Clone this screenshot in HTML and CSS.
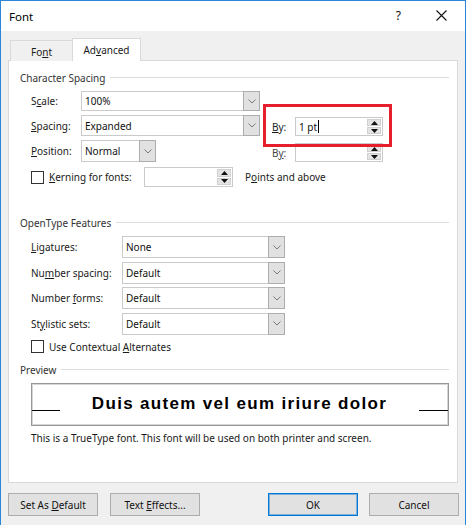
FILE: index.html
```html
<!DOCTYPE html>
<html>
<head>
<meta charset="utf-8">
<link rel="stylesheet" href="styles.css">
</head>
<body>
<div class="window">
  <div class="titlebar">
    <span class="title">Font</span>
    <span class="help">?</span>
    <span class="close"><svg width="11" height="11" viewBox="0 0 11 11"><path d="M0.5 0.5L10.5 10.5M10.5 0.5L0.5 10.5" stroke="#111" stroke-width="1.1" fill="none"/></svg></span>
  </div>
  <div class="body">
    <div class="tabs">
      <div class="tab"><span>Fo<u>n</u>t</span></div>
      <div class="tab active"><span>Ad<u>v</u>anced</span></div>
    </div>
    <div class="panel">
      <div class="group-head"><span>Character Spacing</span><i class="rule"></i></div>
      <div class="cs-grid">
        <div class="lbl r1">S<u>c</u>ale:</div>
        <div class="combo r1 wide"><span class="val">100%</span><span class="dd"><svg width="8" height="5" viewBox="0 0 8 5"><path d="M0.5 0.5L4 4L7.5 0.5" stroke="#7a7a7a" fill="none"/></svg></span></div>

        <div class="lbl r2"><u>S</u>pacing:</div>
        <div class="combo r2 wide"><span class="val">Expanded</span><span class="dd"><svg width="8" height="5" viewBox="0 0 8 5"><path d="M0.5 0.5L4 4L7.5 0.5" stroke="#7a7a7a" fill="none"/></svg></span></div>
        <div class="bylbl r2"><span><u>B</u>y:</span></div>
        <div class="spin r2 by"><span class="val"><span>1 pt</span><i class="caret"></i></span><span class="spbtns"><span class="spb"><svg width="7" height="4" viewBox="0 0 7 4"><path d="M3.5 0L7 4H0Z" fill="#111"/></svg></span><span class="spb"><svg width="7" height="4" viewBox="0 0 7 4"><path d="M0 0H7L3.5 4Z" fill="#111"/></svg></span></span></div>

        <div class="lbl r3"><u>P</u>osition:</div>
        <div class="combo r3 narrow"><span class="val">Normal</span><span class="dd"><svg width="8" height="5" viewBox="0 0 8 5"><path d="M0.5 0.5L4 4L7.5 0.5" stroke="#7a7a7a" fill="none"/></svg></span></div>
        <div class="bylbl r3"><span>B<u>y</u>:</span></div>
        <div class="spin r3 by"><span class="val"></span><span class="spbtns"><span class="spb"><svg width="7" height="4" viewBox="0 0 7 4"><path d="M3.5 0L7 4H0Z" fill="#111"/></svg></span><span class="spb"><svg width="7" height="4" viewBox="0 0 7 4"><path d="M0 0H7L3.5 4Z" fill="#111"/></svg></span></span></div>

        <div class="highlight"></div>
      </div>
      <div class="kern-row">
        <div class="check-label kern"><span class="cb"></span><span><u>K</u>erning for fonts:</span></div>
        <div class="spin kspin"><span class="val"></span><span class="spbtns"><span class="spb"><svg width="7" height="4" viewBox="0 0 7 4"><path d="M3.5 0L7 4H0Z" fill="#111"/></svg></span><span class="spb"><svg width="7" height="4" viewBox="0 0 7 4"><path d="M0 0H7L3.5 4Z" fill="#111"/></svg></span></span></div>
        <div class="pts">P<u>o</u>ints and above</div>
      </div>

      <div class="group-head ot-head"><span>OpenType Features</span><i class="rule"></i></div>
      <div class="ot-grid">
        <div class="lbl"><u>L</u>igatures:</div>
        <div class="combo"><span class="val">None</span><span class="dd"><svg width="8" height="5" viewBox="0 0 8 5"><path d="M0.5 0.5L4 4L7.5 0.5" stroke="#7a7a7a" fill="none"/></svg></span></div>
        <div class="lbl">Nu<u>m</u>ber spacing:</div>
        <div class="combo"><span class="val">Default</span><span class="dd"><svg width="8" height="5" viewBox="0 0 8 5"><path d="M0.5 0.5L4 4L7.5 0.5" stroke="#7a7a7a" fill="none"/></svg></span></div>
        <div class="lbl">Number <u>f</u>orms:</div>
        <div class="combo"><span class="val">Default</span><span class="dd"><svg width="8" height="5" viewBox="0 0 8 5"><path d="M0.5 0.5L4 4L7.5 0.5" stroke="#7a7a7a" fill="none"/></svg></span></div>
        <div class="lbl">St<u>y</u>listic sets:</div>
        <div class="combo"><span class="val">Default</span><span class="dd"><svg width="8" height="5" viewBox="0 0 8 5"><path d="M0.5 0.5L4 4L7.5 0.5" stroke="#7a7a7a" fill="none"/></svg></span></div>
      </div>
      <div class="check-label ctx"><span class="cb"></span><span>Use Contextual <u>A</u>lternates</span></div>

      <div class="group-head pv-head"><span>Preview</span><i class="rule"></i></div>
      <div class="preview-box">
        <i class="pline left"></i>
        <span class="ptext">Duis autem vel eum iriure dolor</span>
        <i class="pline right"></i>
      </div>
      <div class="desc">This is a TrueType font. This font will be used on both printer and screen.</div>
    </div>
    <div class="footer">
      <button class="btn">Set As <u>D</u>efault</button>
      <button class="btn">Text <u>E</u>ffects...</button>
      <span class="spacer"></span>
      <button class="btn default">OK</button>
      <button class="btn">Cancel</button>
    </div>
  </div>
</div>
</body>
</html>
```
FILE: styles.css
```css
html, body {
  margin: 0;
  padding: 0;
  background: #f0f0f0;
}
body {
  font-family: "Noto Sans", "Open Sans", sans-serif;
  font-size: 10px;
  color: #1a1a1a;
}
u { text-decoration: underline; text-underline-offset: 1px; }

.window {
  width: 466px;
  height: 525px;
  box-sizing: border-box;
  border: 1px solid #2b86d6;
  border-bottom: none;
  background: #f0f0f0;
  display: flex;
  flex-direction: column;
}

.titlebar {
  height: 30px;
  background: #fff;
  display: flex;
  align-items: center;
  flex: none;
}
.title {
  font-size: 11.5px;
  color: #000;
  margin-left: 8px;
  flex: 1;
}
.help {
  font-size: 12px;
  color: #111;
  margin-right: 35px;
  margin-top: -1px;
}
.close {
  display: flex;
  margin-right: 18px;
  margin-top: -1px;
}

.body {
  flex: 1;
  display: flex;
  flex-direction: column;
  padding: 7px 7px 0 7px;
}

.tabs {
  display: flex;
  align-items: flex-end;
  padding-left: 2px;
  height: 23px;
  margin-bottom: -1px;
  position: relative;
  z-index: 1;
}
.tab {
  box-sizing: border-box;
  height: 21px;
  border: 1px solid #d9d9d9;
  border-bottom: none;
  border-right: none;
  background: #f0f0f0;
  display: flex;
  align-items: center;
  justify-content: center;
  width: 62px;
  padding-top: 1px;
}
.tab.active {
  height: 23px;
  width: 69px;
  background: #fff;
  border-right: 1px solid #d9d9d9;
  padding-top: 0;
}

.panel {
  box-sizing: border-box;
  height: 423px;
  background: #fff;
  border: 1px solid #d9d9d9;
  padding: 9px 8px 0 0;
  display: flex;
  flex-direction: column;
}

.group-head {
  display: flex;
  align-items: center;
  height: 16px;
  padding-left: 11px;
  color: #333;
}
.group-head .rule {
  flex: 1;
  height: 1px;
  background: #dcdcdc;
  margin-left: 5px;
  margin-top: -1px;
}

.lbl {
  align-self: center;
  line-height: 16px;
  white-space: nowrap;
}

.cs-grid {
  position: relative;
  margin-top: 5px;
  padding-left: 22px;
  display: grid;
  grid-template-columns: 50px 179px 12px 23px 88px;
  grid-template-rows: 20px 21px 22px;
  row-gap: 4px;
}
.cs-grid .r1 { grid-row: 1; }
.cs-grid .r2 { grid-row: 2; }
.cs-grid .r3 { grid-row: 3; }
.cs-grid .lbl { grid-column: 1; }
.cs-grid .combo { grid-column: 2; }
.cs-grid .combo.narrow { width: 75px; }
.cs-grid .bylbl {
  grid-column: 4;
  display: flex;
  align-items: center;
  align-self: end;
  height: 19px;
}
.cs-grid .by {
  grid-column: 5;
  align-self: end;
  height: 19px;
}
.bylbl.r3 { color: #444; }

.combo {
  box-sizing: border-box;
  display: flex;
  border: 1px solid #cacaca;
  background: #fff;
  height: 100%;
}
.combo .val {
  flex: 1;
  display: flex;
  align-items: center;
  padding-left: 3px;
  color: #111;
}
.combo .dd {
  box-sizing: border-box;
  width: 17px;
  margin: -1px -1px -1px 0;
  border: 1px solid #adadad;
  background: #e1e1e1;
  display: flex;
  align-items: center;
  justify-content: center;
}

.spin {
  box-sizing: border-box;
  display: flex;
  border: 1px solid #cacaca;
  background: #fff;
}
.spin .val {
  flex: 1;
  display: flex;
  align-items: center;
  padding-left: 3px;
  color: #111;
}
.caret {
  display: inline-block;
  width: 1px;
  height: 13px;
  background: #000;
  margin-left: 1px;
}
.spbtns {
  width: 15px;
  display: flex;
  flex-direction: column;
  gap: 1px;
  padding: 1px 1px 1px 0;
  box-sizing: border-box;
}
.spb {
  flex: 1;
  background: #e4e4e4;
  border: 1px solid #d0d0d0;
  display: flex;
  align-items: center;
  justify-content: center;
}

.highlight {
  position: absolute;
  left: 254px;
  top: 13px;
  width: 129px;
  height: 43px;
  box-sizing: border-box;
  border: 3px solid #e5202c;
  pointer-events: none;
}

.kern-row {
  display: flex;
  align-items: center;
  height: 20px;
  margin-top: 5px;
  padding-left: 22px;
}
.check-label {
  display: flex;
  align-items: center;
  gap: 5px;
}
.check-label.kern { width: 113px; }
.cb {
  box-sizing: border-box;
  width: 13px;
  height: 13px;
  border: 1px solid #333;
  background: #fff;
  flex: none;
}
.kspin {
  width: 89px;
  height: 20px;
}
.pts { margin-left: 12px; }

.ot-head { margin-top: 28px; }
.ot-grid {
  margin-top: 5px;
  padding-left: 22px;
  display: grid;
  grid-template-columns: 91px 163px;
  grid-auto-rows: 22px;
  row-gap: 3.5px;
}
.ctx {
  margin-top: 4px;
  height: 16px;
  padding-left: 22px;
}

.pv-head { margin-top: 7px; }
.preview-box {
  box-sizing: border-box;
  margin: 5px 0 0 22px;
  width: 418px;
  height: 43px;
  border: 1px solid #979797;
  box-shadow: inset 0 0 0 1px #d6d6d6;
  display: flex;
  align-items: flex-start;
  padding-top: 10px;
}
.pline {
  height: 1px;
  background: #000;
  margin-top: 16px;
  flex: none;
}
.pline.left { width: 28px; }
.pline.right { width: 29px; }
.ptext {
  flex: 1;
  text-align: center;
  font-family: "Liberation Sans", Arial, sans-serif;
  font-weight: bold;
  font-size: 17px;
  line-height: 20px;
  letter-spacing: 1.33px;
  color: #000;
}
.desc {
  margin-top: 4px;
  padding-left: 22px;
  line-height: 16px;
}

.footer {
  display: flex;
  padding: 10px 0 0 0;
  margin-right: -1px;
  gap: 12px;
}
.spacer { flex: 1; }
.btn {
  box-sizing: border-box;
  width: 90px;
  height: 23px;
  background: #e1e1e1;
  border: 1px solid #adadad;
  font-family: "Noto Sans", "Open Sans", sans-serif;
  font-size: 10px;
  color: #111;
  padding: 0;
  margin: 0;
}
.btn.default {
  border: 1px solid #0078d7;
  box-shadow: inset 0 0 0 1px rgba(0, 120, 215, 0.45);
  margin-right: -1px;
}
```
